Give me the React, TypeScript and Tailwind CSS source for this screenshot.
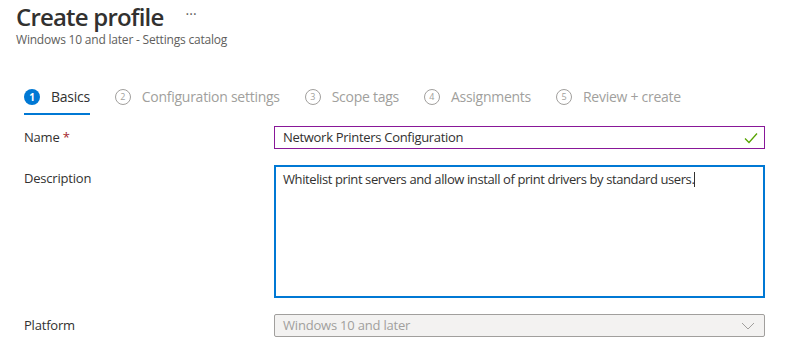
import React from 'react';

const steps = [
  { n: 1, label: 'Basics', active: true },
  { n: 2, label: 'Configuration settings' },
  { n: 3, label: 'Scope tags' },
  { n: 4, label: 'Assignments' },
  { n: 5, label: 'Review + create' },
];

export default function App() {
  return (
    <main
      className="w-[792px] h-[363px] bg-white overflow-hidden text-[#323130]"
      style={{ fontFamily: '"Open Sans", "Noto Sans", sans-serif' }}
    >
      {/* Header */}
      <div className="pl-4 pt-[1px]">
        <div className="flex items-center">
          <h1 className="text-[24px] leading-[32px] font-semibold tracking-[-0.8px]">Create profile</h1>
          <span className="ml-[22px] text-[#605e5c] text-[14px] leading-none -mt-[6px]">···</span>
        </div>
        <p className="text-[12px] leading-[14px] text-[#605e5c] tracking-[-0.2px]">
          Windows 10 and later - Settings catalog
        </p>
      </div>

      {/* Wizard steps */}
      <nav className="mt-[37px] pl-6 flex items-start h-[29px]">
        {steps.map((s) => (
          <div key={s.n} className="flex flex-col mr-[25px]">
            <div className="flex items-center h-[25px] gap-[11px]">
              {s.active ? (
                <span className="w-4 h-4 rounded-full bg-[#0078d4] text-white text-[10px] font-bold flex items-center justify-center leading-none">
                  {s.n}
                </span>
              ) : (
                <span className="w-4 h-4 rounded-full border border-[#a19f9d] text-[#a19f9d] text-[9px] flex items-center justify-center leading-none">
                  {s.n}
                </span>
              )}
              <span
                className={`text-[14px] tracking-[-0.27px] ${
                  s.active ? 'text-[#323130]' : 'text-[#a19f9d]'
                }`}
              >
                {s.label}
              </span>
            </div>
            <div className={`h-[2px] mt-[4px] ${s.active ? 'bg-[#0078d4]' : 'bg-transparent'}`} />
          </div>
        ))}
      </nav>

      {/* Form */}
      <div className="pl-6 pr-[27px] mt-[13px] text-[13px] tracking-[-0.2px]">
        <div className="flex items-center h-[23px]">
          <label className="w-[250px]">
            Name <span className="text-[#a4262c]">*</span>
          </label>
          <div className="flex-1 h-[23px] border border-[#881798] flex items-center px-[8px]">
            <span className="flex-1 tracking-[-0.3px]">Network Printers Configuration</span>
            <svg width="14" height="12" viewBox="0 0 14 12" className="mr-[-2px]">
              <path d="M1 6.5 L5 10.5 L13 1.5" fill="none" stroke="#57a300" strokeWidth="1.3" />
            </svg>
          </div>
        </div>

        <div className="flex mt-[16px]">
          <label className="w-[250px] pt-[4px]">Description</label>
          <div className="flex-1 h-[133px] border-2 border-[#0078d4] px-[7px] pt-[3px] tracking-[-0.4px]">
            Whitelist print servers and allow install of print drivers by standard users.
            <span className="inline-block w-px h-[15px] bg-[#323130] align-middle -mt-[2px]" />
          </div>
        </div>

        <div className="flex items-center mt-[16px] h-[23px]">
          <label className="w-[250px]">Platform</label>
          <div className="flex-1 h-[23px] border border-[#a19f9d] rounded-[2px] bg-[#f3f2f1] flex items-center px-[8px] text-[#a19f9d]">
            <span className="flex-1">Windows 10 and later</span>
            <svg width="14" height="8" viewBox="0 0 14 8" className="mr-[1px]">
              <path d="M1 1 L7 7 L13 1" fill="none" stroke="#a19f9d" strokeWidth="1" />
            </svg>
          </div>
        </div>
      </div>
    </main>
  );
}
